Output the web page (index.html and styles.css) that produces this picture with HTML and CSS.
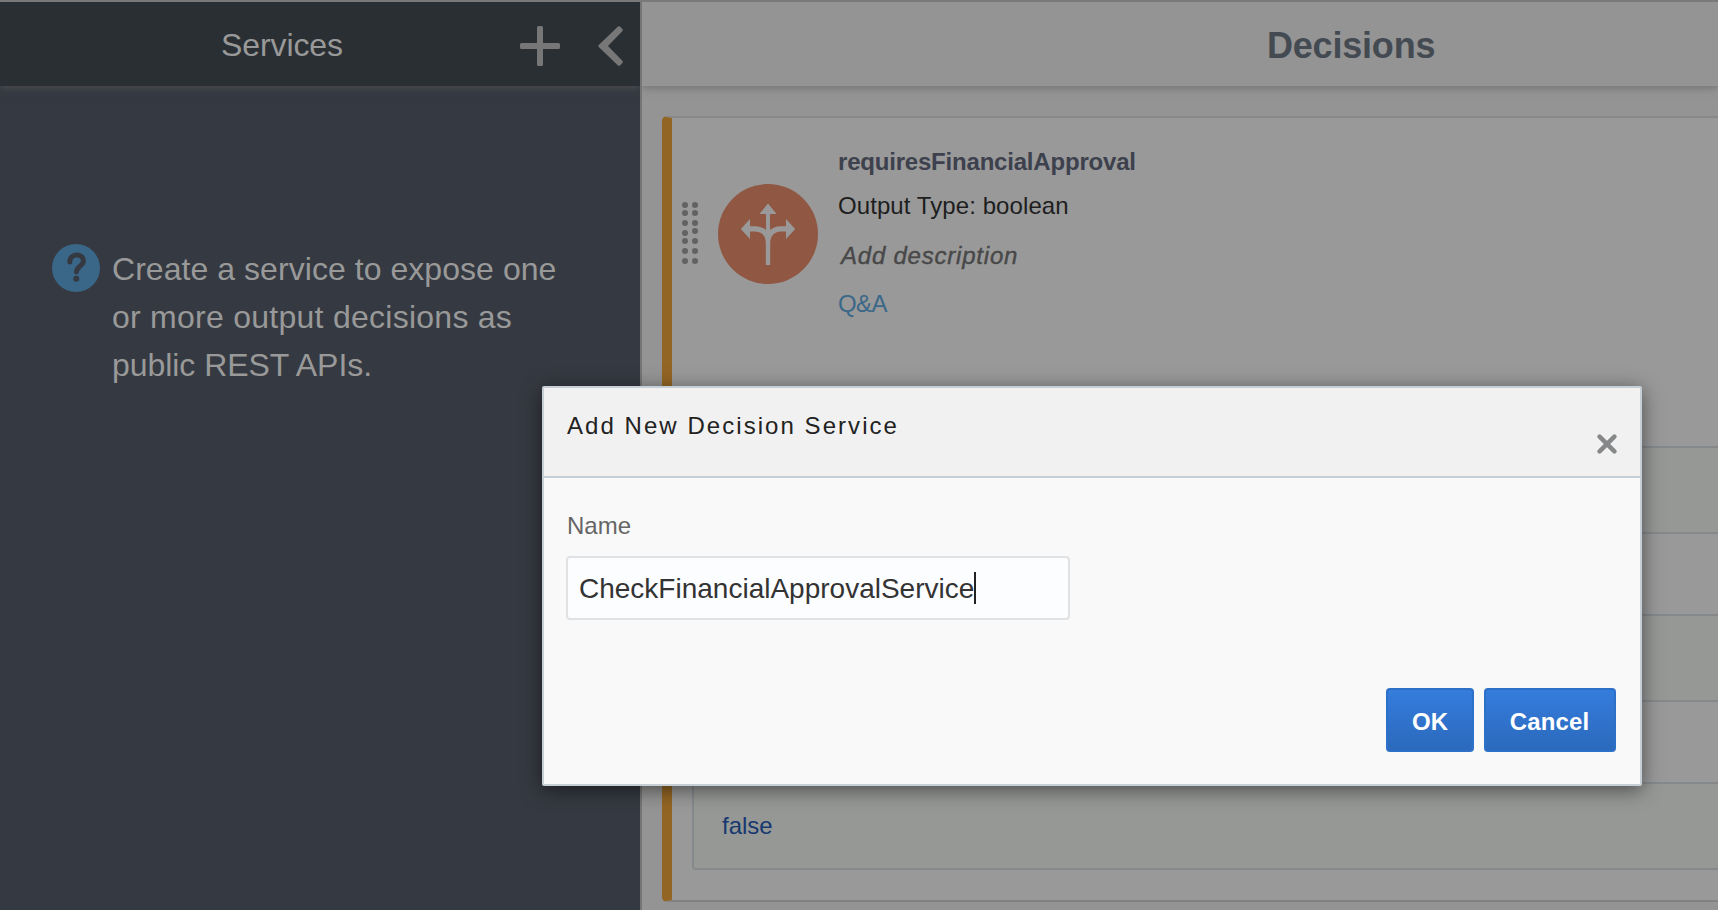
FILE: index.html
```
<!DOCTYPE html>
<html lang="en">
<head>
<meta charset="utf-8">
<title>Decisions</title>
<link rel="stylesheet" href="styles.css">
</head>
<body>
<div class="app">
  <aside class="sidebar">
    <header class="sidebar-head">
      <h2 class="sidebar-title">Services</h2>
      <svg class="icon-add" width="40" height="40" viewBox="0 0 40 40"><path d="M20 2.8V37.2M2.8 20H37.2" stroke="#777" stroke-width="4.600"/><path d="M18.500 0h3Q23 0 23 1.500V17H38.500Q40 17 40 18.500V21.500Q40 23 38.500 23H23V38.500Q23 40 21.500 40H18.500Q17 40 17 38.500V23H1.500Q0 23 0 21.500V18.500Q0 17 1.500 17H17V1.500Q17 0 18.500 0Z" fill="#777"/></svg>
      <svg class="icon-collapse" width="26" height="40" viewBox="0 0 26 40"><path d="M20 .5Q21.200 -.3 22.300 .8L24.300 2.900Q25.300 4.100 24.300 5.300L10 20L24.300 34.700Q25.300 35.900 24.300 37.100L22.300 39.200Q21.200 40.300 20 39.500L.5 20.700Q0 20 .5 19.300Z" fill="#777"/></svg>
    </header>
    <div class="hint">
      <svg class="hint-icon" width="48" height="48" viewBox="0 0 48 48"><circle cx="24" cy="24" r="24" fill="#3a6788"/><path d="M17.800 18C17.800 8.800 31.400 8.700 31.400 17.100C31.400 22.200 24.600 22.100 24.400 28" fill="none" stroke="#353941" stroke-width="5" stroke-linecap="round"/><circle cx="24.300" cy="34.700" r="3" fill="#353941"/></svg>
      <p class="hint-text"><span class="line-a">Create a service to expose one</span><br><span class="line-b">or more output decisions as</span><br><span class="line-c">public REST APIs.</span></p>
    </div>
  </aside>
  <main class="main">
    <header class="main-head"><h1 class="main-title">Decisions</h1></header>
    <article class="card">
      <div class="card-head">
        <svg class="grip" width="16" height="62" viewBox="0 0 16 62" fill="#626262"><circle cx="3" cy="3" r="3"/><circle cx="13" cy="3" r="3"/><circle cx="3" cy="11" r="3"/><circle cx="13" cy="11" r="3"/><circle cx="3" cy="21" r="3"/><circle cx="13" cy="21" r="3"/><circle cx="3" cy="31" r="3"/><circle cx="13" cy="29" r="3"/><circle cx="3" cy="39" r="3"/><circle cx="13" cy="39" r="3"/><circle cx="3" cy="49" r="3"/><circle cx="13" cy="49" r="3"/><circle cx="3" cy="59" r="3"/><circle cx="13" cy="59" r="3"/></svg>
        <svg class="decision-icon" width="100" height="100" viewBox="0 0 100 100"><circle cx="50" cy="50" r="50" fill="#905742"/><path fill="#999" d="M50 19.5L58.6 30H52V46Q56.5 42.3 62 42.2H68V35L77.2 45L68 55V47.5H63Q52.2 48 52.2 59.5V81H47.8V59.5Q47.8 48 37 47.5H32V55L22.8 45L32 35V42.2H38Q43.5 42.3 48 46V30H41.4Z"/></svg>
        <div class="info">
          <div class="info-name">requiresFinancialApproval</div>
          <div class="info-type">Output Type: boolean</div>
          <div class="info-desc">Add description</div>
          <div class="info-qa">Q&amp;A</div>
        </div>
      </div>
      <div class="table">
        <div class="row tall tint"></div>
        <div class="row"></div>
        <div class="row tall tint"></div>
        <div class="row"></div>
        <div class="row tall tint"><span class="value">false</span></div>
      </div>
    </article>
  </main>
</div>
<div class="dialog">
  <header class="dialog-head">
    <h3 class="dialog-title">Add New Decision Service</h3>
    <svg class="dialog-close" width="20" height="20" viewBox="0 0 20 20"><path d="M2.6 2.6L17.4 17.4M17.4 2.6L2.6 17.4" stroke="#858788" stroke-width="4.4" stroke-linecap="round"/></svg>
  </header>
  <div class="dialog-body">
    <div class="label">Name</div>
    <div class="input"><span class="input-text">CheckFinancialApprovalService</span><span class="caret"></span></div>
    <div class="actions">
      <div class="button ok"><span>OK</span></div>
      <div class="button cancel"><span>Cancel</span></div>
    </div>
  </div>
</div>
</body>
</html>
```
FILE: styles.css
```
* { box-sizing: border-box; }
body {
  margin: 0;
  width: 1718px;
  height: 910px;
  overflow: hidden;
  position: relative;
  background: #949494;
  font-family: "Liberation Sans", Arial, sans-serif;
  font-size: 24px;
  line-height: 28px;
}
h1, h2, h3, p { margin: 0; font-weight: 400; }
svg { display: block; flex: none; }
span { white-space: nowrap; }

.app {
  display: flex;
  height: 910px;
  border-top: 2px solid #797979;
}

.sidebar { width: 640px; flex: none; overflow: hidden; background: #353941; }
.sidebar-head {
  display: flex;
  align-items: center;
  height: 84px;
  padding-left: 221px;
  background: #2a2f33;
  box-shadow: 0 2px 8px #4a4b4e;
}
.sidebar-title {
  width: 299px;
  padding-top: 2px;
  color: #999;
  font-size: 32px;
  line-height: 36px;
  letter-spacing: -0.1px;
}
.icon-add, .icon-collapse { margin-top: 4px; }
.icon-collapse { margin-left: 38px; }
.hint { display: flex; padding: 158px 0 0 52px; }
.hint-text {
  margin: 1px 0 0 12px;
  color: #999;
  font-size: 32px;
  line-height: 48px;
  white-space: nowrap;
}
.line-a { letter-spacing: 0.05px; }
.line-b { letter-spacing: 0.26px; }
.line-c { letter-spacing: -0.05px; }

.main {
  flex: 1;
  min-width: 0;
  overflow: hidden;
  border-left: 2px solid #757575;
  background: #949494;
}
.main-head {
  height: 84px;
  padding: 26px 0 0 625px;
  background: #949494;
  box-shadow: 0 2px 8px #727272;
}
.main-title {
  color: #444a52;
  font-size: 36px;
  font-weight: 700;
  line-height: 36px;
  letter-spacing: -0.2px;
}

.card {
  height: 786px;
  margin: 30px 0 0 20px;
  border: solid #898989;
  border-width: 2px 0;
  border-left: 10px solid #936524;
  border-bottom-color: #818181;
  border-radius: 5px 0 0 5px;
  background: #999;
}
.card-head { display: flex; height: 328px; padding-left: 10px; }
.grip { margin-top: 84px; }
.decision-icon { margin: 66px 0 0 20px; }
.info { padding: 30px 0 0 20px; white-space: nowrap; }
.info-name { color: #3d414d; font-weight: 700; letter-spacing: -0.2px; }
.info-type { margin-top: 16px; color: #1e1e1e; letter-spacing: 0.08px; }
.info-desc {
  margin: 22px 0 0 3px;
  color: #484848;
  font-style: italic;
  letter-spacing: 0.78px;
  -webkit-text-stroke: 0.4px #484848;
}
.info-qa { margin-top: 20px; color: #3b6888; letter-spacing: -0.6px; }

.table {
  margin-left: 20px;
  border-left: 2px solid #86898c;
  border-bottom: 2px solid #86898c;
  border-bottom-left-radius: 4px;
  overflow: hidden;
}
.row {
  display: flex;
  align-items: center;
  height: 82px;
  padding-left: 28px;
  border-top: 2px solid #86898c;
}
.row.tall { height: 86px; }
.tint { background: #969896; }
.value { color: #18386f; }

.dialog {
  position: absolute;
  left: 542px;
  top: 386px;
  width: 1100px;
  height: 400px;
  border: 2px solid #c6ced6;
  border-radius: 2px;
  background: #f9f9f9;
  box-shadow: 0 4px 20px rgba(0, 0, 0, 0.5);
}
.dialog-head {
  display: flex;
  justify-content: space-between;
  height: 90px;
  padding: 24px 23px 0;
  border-bottom: 2px solid #c6ced6;
  background: #f1f1f1;
}
.dialog-title { color: #222; font-size: 24px; letter-spacing: 2.05px; white-space: nowrap; }
.dialog-close { margin-top: 22px; }
.dialog-body { padding: 34px 24px 0 22px; }
.label { color: #666; padding-left: 1px; }
.input {
  display: flex;
  align-items: center;
  width: 504px;
  height: 64px;
  margin-top: 16px;
  padding-left: 11px;
  border: 2px solid #e0e2e4;
  border-radius: 4px;
  background: #fcfdff;
}
.input-text { padding-top: 1px; color: #333; font-size: 28px; line-height: 32px; }
.caret { width: 2px; height: 32px; background: #222; }
.actions { display: flex; justify-content: flex-end; gap: 10px; margin-top: 68px; }
.button {
  display: flex;
  justify-content: center;
  align-items: center;
  height: 64px;
  padding-top: 4px;
  border: 2px solid #2d70c8;
  border-radius: 4px;
  background: linear-gradient(#357cdc, #2b6abd);
  color: #fff;
  font-weight: 700;
}
.ok { width: 88px; }
.cancel { width: 132px; letter-spacing: 0.15px; padding-right: 1px; }
```
